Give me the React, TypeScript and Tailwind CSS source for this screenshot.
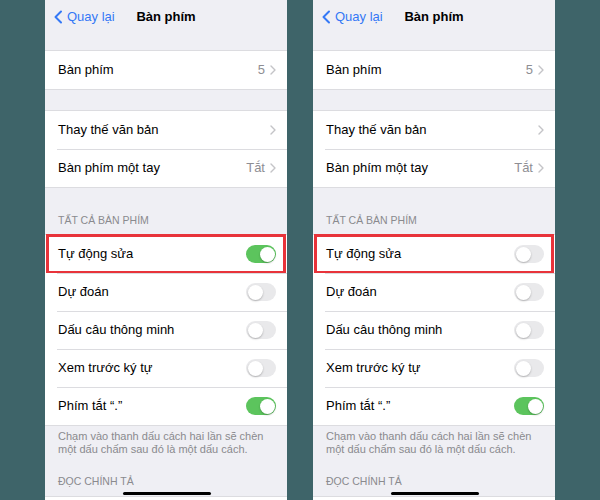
const font = { fontFamily: '"Liberation Sans", Arial, sans-serif' };

function Chevron() {
  return (
    <svg width="6" height="10" viewBox="0 0 6 10" className="ml-[5px]">
      <polyline points="1,1 5,5 1,9" fill="none" stroke="#c4c4c7" strokeWidth="1.4" strokeLinecap="round" strokeLinejoin="round" />
    </svg>
  );
}

function Toggle({ on }: { on: boolean }) {
  return (
    <div
      className={`w-[30px] h-[18px] rounded-full p-[1.5px] flex ${on ? "bg-[#5cc45d] justify-end" : "bg-[#e9e9eb] justify-start"}`}
    >
      <div className="w-[15px] h-[15px] rounded-full bg-white shadow-[0_1px_2px_rgba(0,0,0,0.25)]" />
    </div>
  );
}

function Row({
  label,
  value,
  chevron,
  toggle,
  divider,
  highlight,
}: {
  label: string;
  value?: string;
  chevron?: boolean;
  toggle?: boolean;
  divider?: boolean;
  highlight?: boolean;
}) {
  return (
    <div className="relative h-[38px] bg-white flex items-center pl-[13px] pr-[11px]">
      {divider && <div className="absolute top-0 left-[12px] right-0 h-px bg-[#dcdce0]" />}
      <span className="flex-1 text-[13px] text-black">{label}</span>
      {value && <span className="text-[13px] text-[#8e8e93]">{value}</span>}
      {chevron && <Chevron />}
      {toggle !== undefined && <Toggle on={toggle} />}
      {highlight && <div className="absolute inset-x-[1px] top-[-1px] bottom-[-1px] border-[3px] border-[#e8333a]" />}
    </div>
  );
}

function Section({ children }: { children: React.ReactNode }) {
  return <div className="border-y border-[#dcdce0] bg-white">{children}</div>;
}

function Phone({ autoCorrect }: { autoCorrect: boolean }) {
  return (
    <div className="relative w-[242px] h-[500px] bg-[#efeff4] flex flex-col overflow-hidden" style={font}>
      <div className="relative h-[34px] flex items-center px-[8px]">
        <svg width="10" height="14" viewBox="0 0 10 14" className="mr-[4px]">
          <polyline points="8,1.5 2.5,7 8,12.5" fill="none" stroke="#3478f6" strokeWidth="2" strokeLinecap="round" strokeLinejoin="round" />
        </svg>
        <span className="text-[13px] text-[#3478f6]">Quay lại</span>
        <span className="absolute left-0 right-0 text-center text-[13px] font-semibold text-black pointer-events-none">
          Bàn phím
        </span>
      </div>
      <div className="h-[16px]" />
      <Section>
        <Row label="Bàn phím" value="5" chevron />
      </Section>
      <div className="h-[20px]" />
      <Section>
        <Row label="Thay thế văn bản" chevron />
        <Row label="Bàn phím một tay" value="Tắt" chevron divider />
      </Section>
      <div className="h-[46px] flex items-end pl-[13px] pb-[5px] text-[10.5px] text-[#8a8a8e]">TẤT CẢ BÀN PHÍM</div>
      <Section>
        <Row label="Tự động sửa" toggle={autoCorrect} highlight />
        <Row label="Dự đoán" toggle={false} divider />
        <Row label="Dấu câu thông minh" toggle={false} divider />
        <Row label="Xem trước ký tự" toggle={false} divider />
        <Row label="Phím tắt “.”" toggle={true} divider />
      </Section>
      <div className="pl-[13px] pr-[12px] pt-[4px] text-[11px] leading-[13px] text-[#8a8a8e]">
        Chạm vào thanh dấu cách hai lần sẽ chèn một dấu chấm sau đó là một dấu cách.
      </div>
      <div className="h-[40px] shrink-0 flex items-end pl-[13px] pb-[6px] text-[10.5px] text-[#8a8a8e]">ĐỌC CHÍNH TẢ</div>
      <div className="border-t border-[#dcdce0] bg-white flex-1" />
      <div className="absolute left-[78px] top-[492px] w-[88px] h-[3px] rounded-full bg-black" />
    </div>
  );
}

export default function App() {
  return (
    <div className="w-[600px] h-[500px] bg-[#3e6469] flex justify-center gap-[26px] overflow-hidden">
      <Phone autoCorrect={true} />
      <Phone autoCorrect={false} />
    </div>
  );
}
